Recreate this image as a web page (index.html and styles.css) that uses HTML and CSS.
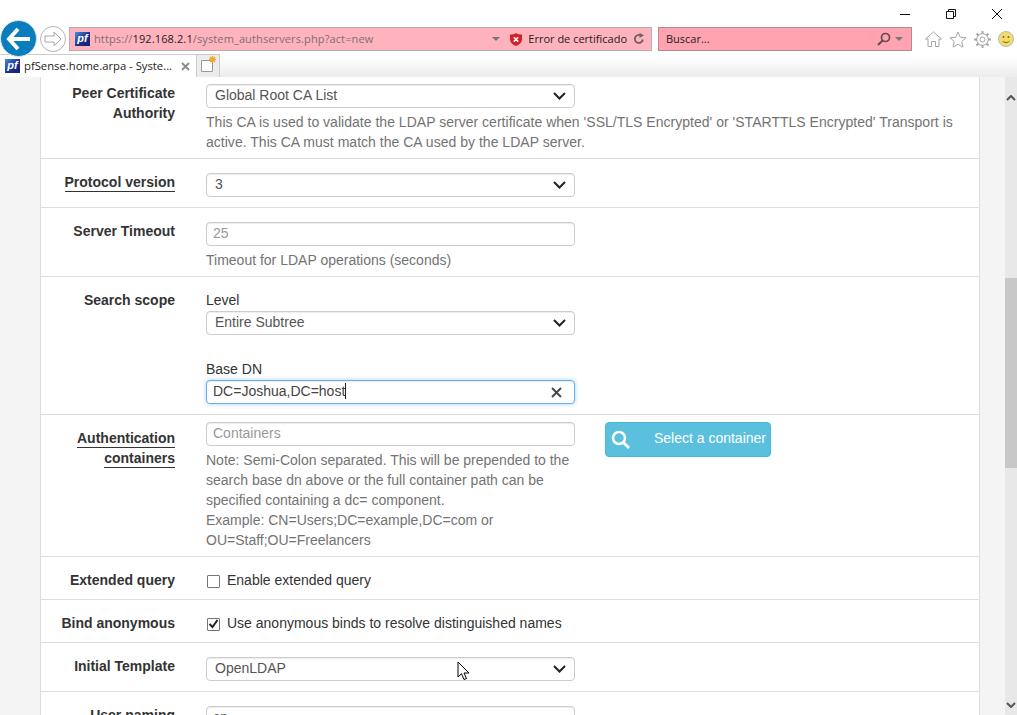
FILE: index.html
```html
<!DOCTYPE html>
<html lang="es">
<head>
  <meta charset="UTF-8">
  <title>pfSense.home.arpa - System: Authentication Servers</title>
  <link rel="stylesheet" href="styles.css">
</head>
<body>
  <!-- browser window -->
  <header class="chrome">
    <div class="wincontrols">
      <svg class="winicon" width="12" height="12" viewBox="0 0 12 12"><path d="M1 6.5h10" stroke="#111" fill="none"/></svg>
      <svg class="winicon" width="12" height="12" viewBox="0 0 12 12"><path d="M1.5 3.5h7v7h-7zM3.5 3.5v-2h7v7h-2" stroke="#111" fill="none"/></svg>
      <svg class="winicon" width="12" height="12" viewBox="0 0 12 12"><path d="M1 1l10 10M11 1L1 11" stroke="#111" fill="none"/></svg>
    </div>

    <div class="toolbar">
      <div class="navspace"></div>
      <div class="addressbar">
        <span class="favicon">pf</span>
        <span class="url">https://<b>192.168.2.1</b>/system_authservers.php?act=new</span>
        <svg class="caret" width="8" height="4" viewBox="0 0 8 4"><path d="M0 0h8L4 4z" fill="#777"/></svg>
        <svg class="shield" width="12" height="13" viewBox="0 0 12 13"><path d="M6 0c1.500 1 3.500 1.500 6 1.500V6c0 3.500-3 6-6 7-3-1-6-3.500-6-7V1.500C2.500 1.500 4.500 1 6 0z" fill="#d2202a"/><path d="M3.800 4.200l4.400 4.400M8.200 4.200L3.800 8.600" stroke="#fff" stroke-width="1.500"/></svg>
        <span class="certerror">Error de certificado</span>
        <svg class="reload" width="12" height="12" viewBox="0 0 12 12"><path d="M9.800 6.500A4 4 0 1 1 7.500 2.300" stroke="#6b6063" stroke-width="1.800" fill="none"/><path d="M6.500 0v5L11 2.200z" fill="#6b6063"/></svg>
      </div>
      <div class="searchbar">
        <span class="searchtext">Buscar...</span>
        <svg width="14" height="14" viewBox="0 0 14 14"><circle cx="8.500" cy="5.500" r="4" stroke="#6b4a52" stroke-width="1.700" fill="none"/><path d="M5.500 8.500L1 13" stroke="#6b4a52" stroke-width="2"/></svg>
        <svg class="caret" width="8" height="4" viewBox="0 0 8 4"><path d="M0 0h8L4 4z" fill="#777"/></svg>
      </div>
      <div class="tools">
        <svg width="17" height="16" viewBox="0 0 17 16"><path d="M.500 8L8.500 1l8 7h-2.500v7.500h-3.500v-5h-4v5H3V8z" stroke="#a5a5a5" fill="#fff"/></svg>
        <svg width="18" height="17" viewBox="0 0 18 17"><path d="M9 1l2.300 5.300 5.700.5-4.300 3.700 1.300 5.600L9 13.200 4 16.100l1.300-5.600L1 6.800l5.700-.5z" stroke="#a5a5a5" fill="#fff"/></svg>
        <svg width="17" height="17" viewBox="0 0 17 17"><circle cx="8.500" cy="8.500" r="2.500" stroke="#a5a5a5" fill="none"/><circle cx="8.500" cy="8.500" r="5.800" stroke="#a5a5a5" stroke-width="1" fill="none"/><path d="M8.500 0v3M8.500 14v3M0 8.500h3M14 8.500h3M2.500 2.500l2 2M12.500 12.500l2 2M14.500 2.500l-2 2M4.500 12.500l-2 2" stroke="#a5a5a5" stroke-width="2"/></svg>
        <svg width="16" height="16" viewBox="0 0 16 16"><circle cx="8" cy="8" r="7.500" fill="#f4dc6b" stroke="#b9b9b9"/><circle cx="5.500" cy="6" r="1" fill="#7a6a20"/><circle cx="10.500" cy="6" r="1" fill="#7a6a20"/><path d="M4.500 10c1.500 2 5.500 2 7 0" stroke="#7a6a20" fill="none"/></svg>
      </div>
    </div>

    <div class="tabstrip">
      <div class="tab">
        <span class="favicon">pf</span>
        <span class="tabtitle">pfSense.home.arpa - Syste...</span>
        <svg width="9" height="9" viewBox="0 0 9 9"><path d="M1 1l7 7M8 1L1 8" stroke="#8a8a8a" stroke-width="1.800"/></svg>
      </div>
      <div class="newtab">
        <svg width="17" height="18" viewBox="0 0 17 18"><path d="M1.500 5.500h9l2 2v9h-11z" fill="#fff" stroke="#999"/><path d="M12.500 1v7M9 4.500h7M10 2l5 5M15 2l-5 5" stroke="#f0a92a" stroke-width="1.400"/></svg>
      </div>
    </div>

    <button class="backbtn" type="button">
      <svg width="26" height="24" viewBox="0 0 26 24"><path d="M12 2L3 12l9 10M3 12h21" stroke="#fff" stroke-width="4" fill="none"/></svg>
    </button>
    <button class="forwardbtn" type="button">
      <svg width="18" height="16" viewBox="0 0 18 16"><path d="M10 1l7 7-7 7v-4H1V5h9z" stroke="#a8a8a8" fill="#fff"/></svg>
    </button>
  </header>

  <div class="viewport">
    <main class="page">
      <div class="panel">

        <div class="formrow firstrow">
          <label class="rowlabel tall">Peer Certificate Authority</label>
          <div class="field">
            <div class="select">Global Root CA List
              <svg class="chevron" width="13" height="8" viewBox="0 0 13 8"><path d="M1 1l5.500 5.500L12 1" stroke="#222" stroke-width="2" fill="none"/></svg>
            </div>
          </div>
          <p class="help widehelp">This CA is used to validate the LDAP server certificate when 'SSL/TLS Encrypted' or 'STARTTLS Encrypted' Transport is active. This CA must match the CA used by the LDAP server.</p>
        </div>

        <div class="formrow">
          <label class="rowlabel"><span class="hint">Protocol version</span></label>
          <div class="field">
            <div class="select">3
              <svg class="chevron" width="13" height="8" viewBox="0 0 13 8"><path d="M1 1l5.500 5.500L12 1" stroke="#222" stroke-width="2" fill="none"/></svg>
            </div>
          </div>
        </div>

        <div class="formrow tightrow">
          <label class="rowlabel">Server Timeout</label>
          <div class="field">
            <input class="input" placeholder="25">
            <p class="help">Timeout for LDAP operations (seconds)</p>
          </div>
        </div>

        <div class="formrow">
          <label class="rowlabel">Search scope</label>
          <div class="stack">
            <span class="fieldtitle">Level</span>
            <div class="select">Entire Subtree
              <svg class="chevron" width="13" height="8" viewBox="0 0 13 8"><path d="M1 1l5.500 5.500L12 1" stroke="#222" stroke-width="2" fill="none"/></svg>
            </div>
            <span class="fieldtitle basedn">Base DN</span>
            <div class="input focused">DC=Joshua,DC=host<span class="textcaret"></span>
              <svg class="clear" width="11" height="11" viewBox="0 0 11 11"><path d="M1 1l9 9M10 1l-9 9" stroke="#444" stroke-width="1.800"/></svg>
            </div>
          </div>
        </div>

        <div class="formrow tightrow">
          <label class="rowlabel"><span class="hint">Authentication containers</span></label>
          <div class="field raised">
            <input class="input" placeholder="Containers">
            <p class="help note">Note: Semi-Colon separated. This will be prepended to the search base dn above or the full container path can be specified containing a dc= component.<br>Example: CN=Users;DC=example,DC=com or OU=Staff;OU=Freelancers</p>
          </div>
          <button class="infobtn raised" type="button">
            <svg width="20" height="20" viewBox="0 0 20 20"><circle cx="8" cy="8" r="6" stroke="#fff" stroke-width="2.500" fill="none"/><path d="M12.500 12.500L18 18" stroke="#fff" stroke-width="2.800"/></svg>
            <span class="btnlabel">Select a container</span>
          </button>
        </div>

        <div class="formrow checkrow">
          <label class="rowlabel">Extended query</label>
          <label class="check"><span class="checkbox"></span>Enable extended query</label>
        </div>

        <div class="formrow checkrow">
          <label class="rowlabel">Bind anonymous</label>
          <label class="check"><span class="checkbox">
            <svg width="11" height="10" viewBox="0 0 11 10"><path d="M1.500 5l3 3 5-7" stroke="#222" stroke-width="2" fill="none"/></svg>
          </span>Use anonymous binds to resolve distinguished names</label>
        </div>

        <div class="formrow">
          <label class="rowlabel">Initial Template</label>
          <div class="field">
            <div class="select">OpenLDAP
              <svg class="chevron" width="13" height="8" viewBox="0 0 13 8"><path d="M1 1l5.500 5.500L12 1" stroke="#222" stroke-width="2" fill="none"/></svg>
            </div>
          </div>
        </div>

        <div class="formrow">
          <label class="rowlabel">User naming</label>
          <div class="field">
            <input class="input" value="cn">
          </div>
        </div>

      </div>
    </main>

    <div class="scrollbar">
      <svg width="10" height="6" viewBox="0 0 10 6"><path d="M1 5l4-4 4 4" stroke="#555" stroke-width="2" fill="none"/></svg>
      <div class="thumb"></div>
      <svg width="10" height="6" viewBox="0 0 10 6"><path d="M1 1l4 4 4-4" stroke="#555" stroke-width="2" fill="none"/></svg>
    </div>

    <svg class="pointer" width="13" height="20" viewBox="0 0 13 20"><path d="M1 1v15l3.500-3.300L7 18.500l2.500-1L7 12h5z" fill="#fff" stroke="#000"/></svg>
  </div>
</body>
</html>
```

FILE: styles.css
```css
* {
  box-sizing: border-box;
}

html, body {
  height: 100%;
}

body {
  margin: 0;
  display: flex;
  flex-direction: column;
  overflow: hidden;
  font-family: "Liberation Sans", Arial, sans-serif;
  font-size: 14px;
  line-height: 20px;
  color: #333;
  background: #fff;
}

/* browser window */
.chrome {
  position: relative;
  height: 77px;
  flex: none;
  background: #fff;
  font-family: "Open Sans", sans-serif;
  font-size: 11px;
  color: #222;
}

.wincontrols {
  height: 27px;
  padding: 8px 14px 0 0;
  display: flex;
  justify-content: flex-end;
  gap: 34px;
}

.toolbar {
  height: 24px;
  display: flex;
}

.navspace {
  width: 69px;
  flex: none;
}

.addressbar {
  width: 583px;
  display: flex;
  align-items: center;
  padding: 0 6px 0 5px;
  background: #ffb3bd;
  border: 1px solid #b3aeb0;
}

.favicon {
  width: 15px;
  height: 14px;
  flex: none;
  background: linear-gradient(135deg, #4a8fd8 0%, #1a2f8f 55%, #14206e 100%);
  color: #fff;
  font: italic bold 11px/13px "Liberation Sans", sans-serif;
  text-align: center;
}

.url {
  margin-left: 4px;
  color: #7d6f73;
  white-space: nowrap;
  letter-spacing: 0.12px;
}

.url b {
  font-weight: 400;
  color: #222;
}

.caret {
  flex: none;
}

.addressbar .caret {
  margin-left: auto;
}

.shield {
  margin-left: 10px;
  flex: none;
}

.certerror {
  margin-left: 6px;
  white-space: nowrap;
}

.reload {
  margin-left: 6px;
  flex: none;
}

.searchbar {
  width: 254px;
  margin-left: 6px;
  display: flex;
  align-items: center;
  gap: 4px;
  padding: 0 8px 0 7px;
  background: #ffa3b0;
  border: 1px solid #b38a92;
}

.searchtext {
  margin-right: auto;
}

.tools {
  flex: 1;
  display: flex;
  align-items: center;
  gap: 7px;
  padding-left: 13px;
}

.tabstrip {
  height: 26px;
  padding-top: 3px;
  display: flex;
  background: linear-gradient(#fff 3px, #fdfdfd 30%, #ececec);
}

.tab {
  width: 197px;
  display: flex;
  align-items: center;
  padding: 0 4px 0 5px;
  background: #fff;
  border-top: 1px solid #ccc;
  border-right: 1px solid #ccc;
}

.tabtitle {
  width: 157px;
  margin-left: 4px;
  white-space: nowrap;
  font-size: 11.270px;
}

.newtab {
  width: 23px;
  padding: 0 0 0 3px;
  background: #ececec;
  border: 1px solid #ccc;
  border-bottom: none;
  border-left: none;
}

.backbtn {
  position: absolute;
  left: 0;
  top: 20px;
  width: 37px;
  height: 37px;
  padding: 0;
  display: flex;
  align-items: center;
  justify-content: center;
  background: #0a7dbd;
  border: 1px solid #dfe6ea;
  border-radius: 50%;
}

.forwardbtn {
  position: absolute;
  left: 40px;
  top: 26px;
  width: 26px;
  height: 26px;
  padding: 0;
  display: flex;
  align-items: center;
  justify-content: center;
  background: #fff;
  border: 1px solid #b5b5b5;
  border-radius: 50%;
}

/* page area */
.viewport {
  position: relative;
  flex: 1;
  min-height: 0;
  display: flex;
  overflow: hidden;
}

.page {
  flex: 1;
  padding: 0 25px 0 40px;
  background: #f4f4f4;
}

.panel {
  background: #fff;
  border-left: 1px solid #ddd;
  border-right: 1px solid #ddd;
}

.formrow {
  display: grid;
  grid-template-columns: 165px 369px auto;
  padding: 13px 0 10px;
  border-bottom: 1px solid #ddd;
}

.firstrow {
  padding: 6px 0 6px;
}

.tightrow {
  padding-bottom: 6px;
}

.checkrow {
  padding-bottom: 9px;
}

.rowlabel {
  padding-right: 31px;
  font-weight: 700;
  text-align: right;
}

.tall {
  grid-row: span 2;
}

.hint {
  padding-bottom: 1px;
  border-bottom: 1px solid #333;
  box-decoration-break: clone;
  -webkit-box-decoration-break: clone;
}

.field {
  margin-top: 1px;
}

.raised {
  margin-top: -6px;
}

.stack {
  display: flex;
  flex-direction: column;
}

.fieldtitle {
  margin-bottom: 1px;
}

.basedn {
  margin-top: 24px;
}

.select,
.input {
  position: relative;
  display: flex;
  align-items: center;
  width: 369px;
  height: 24px;
  padding-bottom: 2px;
  background: #fff;
  border: 1px solid #ccc;
  border-radius: 4px;
  box-shadow: inset 0 1px 1px rgba(0, 0, 0, .075);
  font: 14px "Liberation Sans", Arial, sans-serif;
  color: #555;
}

.select {
  padding-left: 8px;
}

.input {
  padding-left: 6px;
  padding-right: 6px;
  padding-bottom: 4px;
  outline: none;
}

.input::placeholder {
  color: #999;
}

.chevron {
  position: absolute;
  right: 8px;
  top: 7px;
}

.focused {
  padding-bottom: 2px;
  border-color: #66afe9;
  box-shadow: inset 0 1px 1px rgba(0, 0, 0, .075), 0 0 4px rgba(102, 175, 233, .6);
  color: #444;
}

.textcaret {
  width: 1px;
  height: 16px;
  background: #222;
}

.clear {
  position: absolute;
  right: 12px;
  top: 6px;
}

.help {
  margin: 4px 0 0;
  color: #737373;
}

.widehelp {
  grid-column: 2 / 4;
  width: 760px;
  letter-spacing: 0.02px;
}

.note {
  width: 369px;
}

.infobtn {
  justify-self: start;
  width: 166px;
  height: 35px;
  margin-left: 30px;
  padding: 0 4px 0 5px;
  display: flex;
  align-items: center;
  justify-content: space-between;
  background: #5bc0de;
  border: 1px solid #46b8da;
  border-radius: 4px;
  color: #fff;
  font: 14px "Liberation Sans", Arial, sans-serif;
}

.btnlabel {
  margin-bottom: 4px;
}

.check {
  display: flex;
  align-items: center;
  gap: 7px;
  padding-left: 1px;
  color: #333;
}

.checkbox {
  width: 13px;
  height: 13px;
  margin-top: 2px;
  flex: none;
  display: flex;
  align-items: center;
  justify-content: center;
  background: #fff;
  border: 1px solid #767676;
  border-radius: 1px;
}

/* scrollbar */
.scrollbar {
  width: 12px;
  flex: none;
  display: flex;
  flex-direction: column;
  align-items: center;
  background: #e8e8e8;
  padding: 18px 0 7px;
}

.thumb {
  width: 12px;
  height: 190px;
  margin: 177px 0 auto;
  background: #c8c8c8;
}

.pointer {
  position: absolute;
  left: 457px;
  top: 584px;
}
```
